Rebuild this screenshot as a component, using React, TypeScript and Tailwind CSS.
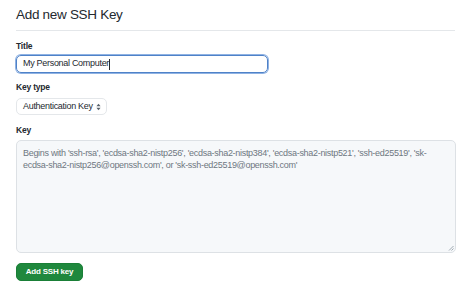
export default function App() {
  return (
    <div
      className="w-[474px] h-[291px] bg-white px-4 text-[#24292f] overflow-hidden"
      style={{ fontFamily: '"Liberation Sans", Arial, sans-serif' }}
    >
      {/* Header */}
      <div className="w-[439px] h-[31px] border-b border-[#e4e7ea] pt-[7px]">
        <h2 className="text-[13.5px] leading-[16px] tracking-[-0.3px] font-normal">Add new SSH Key</h2>
      </div>

      {/* Title */}
      <label className="block mt-[9px] text-[8.5px] leading-[12px] tracking-[-0.2px] font-bold">Title</label>
      <div className="mt-[3px] w-[252px] h-[18px] rounded-[5px] border border-[#4f82c8] shadow-[0_0_0_1px_#8fb2e3] flex items-center px-[6px] text-[9px] tracking-[-0.3px] whitespace-nowrap">
        My Personal Computer
        <span className="inline-block w-px h-[11px] bg-[#24292f]" />
      </div>

      {/* Key type */}
      <label className="block mt-[8px] text-[8.5px] leading-[12px] tracking-[-0.2px] font-bold">Key type</label>
      <div className="mt-[5px] w-[91px] h-[17px] rounded-[5px] border border-[#e4e7ea] bg-white flex items-center justify-between pl-[6px] pr-[5px] text-[9px] tracking-[-0.3px] whitespace-nowrap">
        <span>Authentication Key</span>
        <svg width="5" height="8" viewBox="0 0 6 9" fill="#57606a">
          <path d="M3 0.5 L5.5 3.5 H0.5 Z" />
          <path d="M3 8.5 L5.5 5.5 H0.5 Z" />
        </svg>
      </div>

      {/* Key */}
      <label className="block mt-[9px] text-[8.5px] leading-[12px] tracking-[-0.2px] font-bold">Key</label>
      <div className="relative mt-[4px] w-[440px] h-[113px] rounded-[5px] border border-[#dde1e5] bg-[#f6f8fa] px-[6px] pt-[6px] text-[9px] leading-[12.3px] tracking-[-0.3px] text-[#6e7781]">
        Begins with 'ssh-rsa', 'ecdsa-sha2-nistp256', 'ecdsa-sha2-nistp384', 'ecdsa-sha2-nistp521', 'ssh-ed25519', 'sk-ecdsa-sha2-nistp256@openssh.com', or 'sk-ssh-ed25519@openssh.com'
        <svg className="absolute right-[1px] bottom-[1px]" width="6" height="6" viewBox="0 0 6 6" stroke="#8c959f" strokeWidth="0.8">
          <path d="M1 5.5 L5.5 1" />
          <path d="M3.5 5.5 L5.5 3.5" />
        </svg>
      </div>

      {/* Submit */}
      <button className="mt-[10px] h-[18px] w-[67px] rounded-[5px] bg-[#1f883d] border border-[#1a7f37] text-white text-[8px] tracking-[-0.2px] font-bold flex items-center justify-center">
        Add SSH key
      </button>
    </div>
  );
}
